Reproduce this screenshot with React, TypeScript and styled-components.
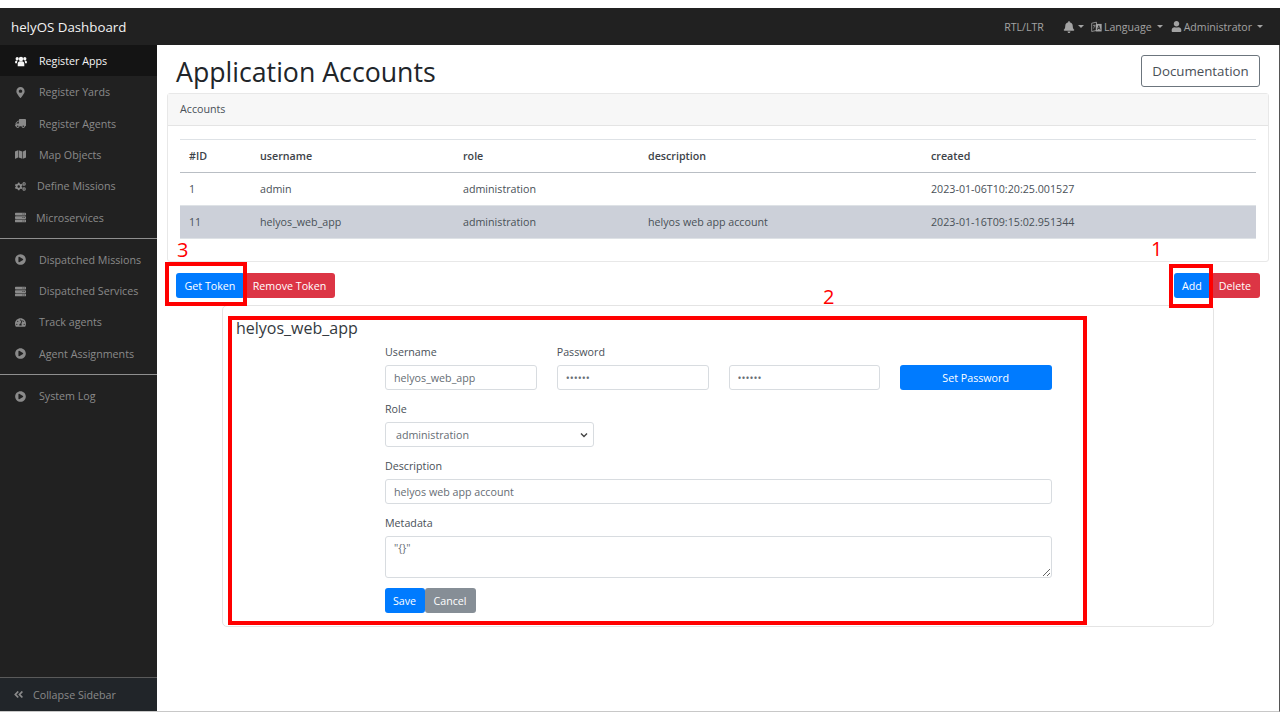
import type { ReactNode } from "react";
import styled, { createGlobalStyle } from "styled-components";
import {
  FaAngleDoubleLeft,
  FaBell,
  FaCogs,
  FaMap,
  FaMapMarkerAlt,
  FaPlayCircle,
  FaServer,
  FaTachometerAlt,
  FaTruck,
  FaUser,
} from "react-icons/fa";

const GlobalStyle = createGlobalStyle`
  html, body {
    margin: 0;
    padding: 0;
    background: #fff;
  }
  * {
    box-sizing: border-box;
  }
  body {
    font-family: "Open Sans", "Noto Sans", sans-serif;
    font-size: 10.7px;
    color: #495057;
  }
`;

const Page = styled.div`
  position: relative;
  width: 1280px;
  height: 720px;
  padding-top: 8px;
  overflow: hidden;
  display: flex;
  flex-direction: column;
`;

const Navbar = styled.header`
  height: 37px;
  flex: none;
  background: #212121;
  display: flex;
  align-items: center;
  padding: 0 17px 0 11px;
  color: #a3a3a3;
`;

const Brand = styled.div`
  font-size: 13.3px;
  color: #f2f2f2;
  margin-right: auto;
`;

const NavItem = styled.div<{ $gap?: number }>`
  display: flex;
  align-items: center;
  gap: 2px;
  font-size: 10.6px;
  margin-left: ${({ $gap }) => $gap ?? 8}px;
  svg {
    font-size: 11px;
  }
`;

const BellIcon = styled(FaBell)`
  && {
    font-size: 12px;
  }
`;

const Caret = styled.span<{ $left?: number }>`
  width: 0;
  height: 0;
  margin-left: ${({ $left }) => $left ?? 3}px;
  border-top: 3px solid #a3a3a3;
  border-left: 3px solid transparent;
  border-right: 3px solid transparent;
`;

const Body = styled.div`
  height: 667px;
  flex: none;
  display: flex;
  border-bottom: 1px solid #c8c8c8;
  border-right: 1px solid #555;
`;

const Sidebar = styled.nav`
  width: 157px;
  flex: none;
  background: #212121;
  display: flex;
  flex-direction: column;
`;

const SideItem = styled.div<{ $active?: boolean; $textLeft?: number }>`
  height: 31.3px;
  flex: none;
  display: flex;
  align-items: center;
  padding: 0.8px 0 0 14px;
  font-size: 10.7px;
  background: ${({ $active }) => ($active ? "#141414" : "transparent")};
  color: ${({ $active }) => ($active ? "#f5f5f5" : "#8a8a8a")};
  span {
    margin-left: ${({ $textLeft }) => ($textLeft ?? 25) - 13}px;
  }
`;

const SideIcon = styled.div<{ $flip?: boolean }>`
  width: 13px;
  flex: none;
  display: flex;
  justify-content: center;
  font-size: 11px;
  transform: ${({ $flip }) => ($flip ? "scaleX(-1)" : "none")};
`;

const SideDivider = styled.hr`
  margin: 5px 0;
  border: 0;
  border-top: 1px solid #8f8f8f;
  width: 100%;
`;

const Collapse = styled.div`
  margin-top: auto;
  height: 34px;
  background: #212529;
  border-top: 1px solid #5a5a5a;
  display: flex;
  align-items: center;
  padding-left: 13px;
  gap: 9px;
  font-size: 10.7px;
  color: #8a8a8a;
  svg {
    font-size: 11px;
  }
`;

const Main = styled.main`
  flex: 1;
  min-width: 0;
  padding: 10px 10px 0;
`;

const TitleRow = styled.div`
  display: flex;
  align-items: center;
  justify-content: space-between;
  padding: 0 9px 0 9px;
  height: 32px;
`;

const Title = styled.h1`
  margin: 0;
  font-size: 26.7px;
  font-weight: 400;
  color: #212529;
`;

const DocButton = styled.button`
  width: 119px;
  height: 32px;
  background: #fff;
  border: 1px solid #6c757d;
  border-radius: 3px;
  color: #495057;
  font: inherit;
  font-size: 13.3px;
`;

const Card = styled.section`
  margin: 6px 0 0;
  width: 1102px;
  height: 169px;
  border: 1px solid #e8e8e8;
  border-radius: 3px;
`;

const CardHeader = styled.div`
  height: 32px;
  padding: 0 0 2px 12px;
  background: #f7f7f7;
  border-bottom: 1px solid #e4e4e4;
  display: flex;
  align-items: center;
  font-size: 10.7px;
  color: #495057;
`;

const TableWrap = styled.div`
  padding: 13px 12px 0;
`;

const Table = styled.table`
  width: 100%;
  border-collapse: collapse;
  table-layout: fixed;
  font-size: 10.7px;
  color: #495057;
`;

const Th = styled.th<{ $w?: number }>`
  width: ${({ $w }) => ($w ? `${$w}px` : "auto")};
  height: 33px;
  padding: 0 9px;
  text-align: left;
  font-weight: 600;
  color: #3d4349;
  border-top: 1px solid #dee2e6;
  border-bottom: 1px solid #b9bec4;
`;

const Td = styled.td`
  height: 33px;
  padding: 0 9px;
  border-bottom: 1px solid #dee2e6;
`;

const Row = styled.tr<{ $selected?: boolean }>`
  background: ${({ $selected }) => ($selected ? "#ccd0d9" : "transparent")};
`;

const ActionRow = styled.div`
  display: flex;
  justify-content: space-between;
  padding: 11px 9px 0 9px;
`;

const ButtonGroup = styled.div`
  display: flex;
`;

const Btn = styled.button<{ $color: string; $wide?: number }>`
  height: 25px;
  width: ${({ $wide }) => $wide}px;
  padding: 0 1px 0 0;
  border: 0;
  border-radius: 3px;
  background: ${({ $color }) => $color};
  color: #fff;
  font: inherit;
  font-size: 10.7px;
`;

const FormCard = styled.section`
  margin: 7px 0 0 55px;
  width: 992px;
  height: 322px;
  border: 1px solid #e4e4e4;
  border-radius: 5px;
  padding: 12px 13px 0;
`;

const FormTitle = styled.div`
  font-size: 16px;
  line-height: 20px;
  color: #343a40;
`;

const FormBody = styled.form`
  width: 667px;
  margin: 4px 0 0 149px;
`;

const Label = styled.label`
  display: block;
  height: 23px;
  padding-top: 2px;
  line-height: 16px;
  font-size: 10.7px;
  color: #495057;
`;

const Field = styled.input`
  display: block;
  width: 100%;
  height: 25px;
  padding: 0 8px;
  border: 1px solid #d8dce0;
  border-radius: 3px;
  background: #fff;
  color: #666d74;
  font: inherit;
  font-size: 10.7px;
  outline: 0;
`;

const FourCols = styled.div`
  display: grid;
  grid-template-columns: repeat(4, 1fr);
  gap: 20px;
`;

const Block = styled.div<{ $width?: number }>`
  margin-top: 9px;
  width: ${({ $width }) => ($width ? `${$width}px` : "auto")};
`;

const SetPassword = styled(Btn)`
  width: 100%;
`;

const SelectBox = styled.select`
  display: block;
  width: 100%;
  height: 25px;
  padding: 0 10px;
  border: 1px solid #d8dce0;
  border-radius: 3px;
  appearance: none;
  background: #fff
    url("data:image/svg+xml,%3Csvg xmlns='http://www.w3.org/2000/svg' width='8' height='6' viewBox='0 0 8 6'%3E%3Cpath d='M1 1.5l3 3 3-3' fill='none' stroke='%23444' stroke-width='1.4'/%3E%3C/svg%3E")
    no-repeat right 5px center;
  color: #666d74;
  font: inherit;
  font-size: 10.7px;
`;

const TextBox = styled.textarea`
  display: block;
  width: 100%;
  height: 42px;
  padding: 4px 8px;
  border: 1px solid #d8dce0;
  border-radius: 3px;
  color: #666d74;
  font: inherit;
  font-size: 10.7px;
  outline: 0;
`;

const FormButtons = styled.div`
  display: flex;
  margin-top: 10px;
`;

const Callout = styled.div<{ $x: number; $y: number; $w: number; $h: number }>`
  position: absolute;
  left: ${({ $x }) => $x}px;
  top: ${({ $y }) => $y}px;
  width: ${({ $w }) => $w}px;
  height: ${({ $h }) => $h}px;
  border: 4px solid #ff0000;
  pointer-events: none;
`;

const CalloutNumber = styled.div<{ $x: number; $y: number }>`
  position: absolute;
  left: ${({ $x }) => $x}px;
  top: ${({ $y }) => $y}px;
  font-size: 20px;
  line-height: 24px;
  color: #ff0000;
`;

// the reference's group icon is narrower than the one in the icon set
function UsersIcon() {
  return (
    <svg width="12" height="11" viewBox="0 0 16 15" fill="currentColor">
      <circle cx="8" cy="4" r="3" />
      <circle cx="2.8" cy="3.6" r="2.2" />
      <circle cx="13.2" cy="3.6" r="2.2" />
      <path d="M3.5 14V10.5C3.5 8.5 5 7 6.5 7h3c1.5 0 3 1.5 3 3.5V14z" />
      <path d="M0 10V8c0-1.2 1-2 2-2h1.500C2.700 7 2.500 8.500 2.500 10zM16 10V8c0-1.200-1-2-2-2h-1.500c.8 1 1 2.500 1 4z" />
    </svg>
  );
}

function LanguageMark() {
  return (
    <svg width="11" height="12" viewBox="0 0 16 16">
      <path d="M1 2.500 8 1v12l-7 1.500z" fill="none" stroke="currentColor" strokeWidth="1.200" />
      <path d="M2.800 6h3.400M4.500 4.500v1.500M3 10c1.500-.8 2.500-2.200 3-4" fill="none" stroke="currentColor" />
      <rect x="7" y="3.500" width="8.500" height="11" fill="currentColor" />
      <path d="M9.300 12l2-6 2 6M10 10.200h2.600" fill="none" stroke="#212121" strokeWidth="1.200" />
    </svg>
  );
}

type LinkItem = {
  icon: ReactNode;
  label: string;
  active?: boolean;
  left?: number;
  flip?: boolean;
};

const topLinks: LinkItem[] = [
  { icon: <UsersIcon />, label: "Register Apps", active: true },
  { icon: <FaMapMarkerAlt />, label: "Register Yards" },
  { icon: <FaTruck />, label: "Register Agents", flip: true },
  { icon: <FaMap />, label: "Map Objects" },
  { icon: <FaCogs />, label: "Define Missions", left: 23 },
  { icon: <FaServer />, label: "Microservices", left: 22 },
];

const midLinks: LinkItem[] = [
  { icon: <FaPlayCircle />, label: "Dispatched Missions" },
  { icon: <FaServer />, label: "Dispatched Services" },
  { icon: <FaTachometerAlt />, label: "Track agents" },
  { icon: <FaPlayCircle />, label: "Agent Assignments" },
];

function SideLinks({ items }: { items: LinkItem[] }) {
  return (
    <>
      {items.map((item) => (
        <SideItem key={item.label} $active={item.active} $textLeft={item.left}>
          <SideIcon $flip={item.flip}>{item.icon}</SideIcon>
          <span>{item.label}</span>
        </SideItem>
      ))}
    </>
  );
}

export default function App() {
  return (
    <Page>
      <GlobalStyle />
      <Navbar>
        <Brand>helyOS Dashboard</Brand>
        <NavItem>RTL/LTR</NavItem>
        <NavItem $gap={19}>
          <BellIcon />
          <Caret $left={1} />
        </NavItem>
        <NavItem $gap={7}>
          <LanguageMark />
          Language
          <Caret />
        </NavItem>
        <NavItem $gap={8}>
          <FaUser />
          Administrator
          <Caret />
        </NavItem>
      </Navbar>
      <Body>
        <Sidebar>
          <SideLinks items={topLinks} />
          <SideDivider />
          <SideLinks items={midLinks} />
          <SideDivider />
          <SideLinks items={[{ icon: <FaPlayCircle />, label: "System Log" }]} />
          <Collapse>
            <FaAngleDoubleLeft />
            Collapse Sidebar
          </Collapse>
        </Sidebar>
        <Main>
          <TitleRow>
            <Title>Application Accounts</Title>
            <DocButton>Documentation</DocButton>
          </TitleRow>
          <Card>
            <CardHeader>Accounts</CardHeader>
            <TableWrap>
              <Table>
                <thead>
                  <tr>
                    <Th $w={71}>#ID</Th>
                    <Th $w={203}>username</Th>
                    <Th $w={185}>role</Th>
                    <Th $w={283}>description</Th>
                    <Th>created</Th>
                  </tr>
                </thead>
                <tbody>
                  <Row>
                    <Td>1</Td>
                    <Td>admin</Td>
                    <Td>administration</Td>
                    <Td></Td>
                    <Td>2023-01-06T10:20:25.001527</Td>
                  </Row>
                  <Row $selected>
                    <Td>11</Td>
                    <Td>helyos_web_app</Td>
                    <Td>administration</Td>
                    <Td>helyos web app account</Td>
                    <Td>2023-01-16T09:15:02.951344</Td>
                  </Row>
                </tbody>
              </Table>
            </TableWrap>
          </Card>
          <ActionRow>
            <ButtonGroup>
              <Btn $color="#007bff" $wide={69}>Get Token</Btn>
              <Btn $color="#dc3545" $wide={90}>Remove Token</Btn>
            </ButtonGroup>
            <ButtonGroup>
              <Btn $color="#007bff" $wide={37}>Add</Btn>
              <Btn $color="#dc3545" $wide={49}>Delete</Btn>
            </ButtonGroup>
          </ActionRow>
          <FormCard>
            <FormTitle>helyos_web_app</FormTitle>
            <FormBody>
              <FourCols>
                <div>
                  <Label>Username</Label>
                  <Field defaultValue="helyos_web_app" />
                </div>
                <div>
                  <Label>Password</Label>
                  <Field type="password" defaultValue="secret" />
                </div>
                <div>
                  <Label>&nbsp;</Label>
                  <Field type="password" defaultValue="secret" />
                </div>
                <div>
                  <Label>&nbsp;</Label>
                  <SetPassword type="button" $color="#007bff">Set Password</SetPassword>
                </div>
              </FourCols>
              <Block $width={209}>
                <Label>Role</Label>
                <SelectBox defaultValue="administration">
                  <option>administration</option>
                </SelectBox>
              </Block>
              <Block>
                <Label>Description</Label>
                <Field defaultValue="helyos web app account" />
              </Block>
              <Block>
                <Label>Metadata</Label>
                <TextBox defaultValue={'"{}"'} />
              </Block>
              <FormButtons>
                <Btn type="button" $color="#007bff" $wide={40}>Save</Btn>
                <Btn type="button" $color="#868e96" $wide={51}>Cancel</Btn>
              </FormButtons>
            </FormBody>
          </FormCard>
        </Main>
      </Body>
      <Callout $x={165} $y={262} $w={82} $h={44} />
      <Callout $x={1169} $y={264} $w={44} $h={44} />
      <Callout $x={228} $y={316} $w={859} $h={309} />
      <CalloutNumber $x={177} $y={238}>3</CalloutNumber>
      <CalloutNumber $x={1151} $y={237}>1</CalloutNumber>
      <CalloutNumber $x={823} $y={285}>2</CalloutNumber>
    </Page>
  );
}
